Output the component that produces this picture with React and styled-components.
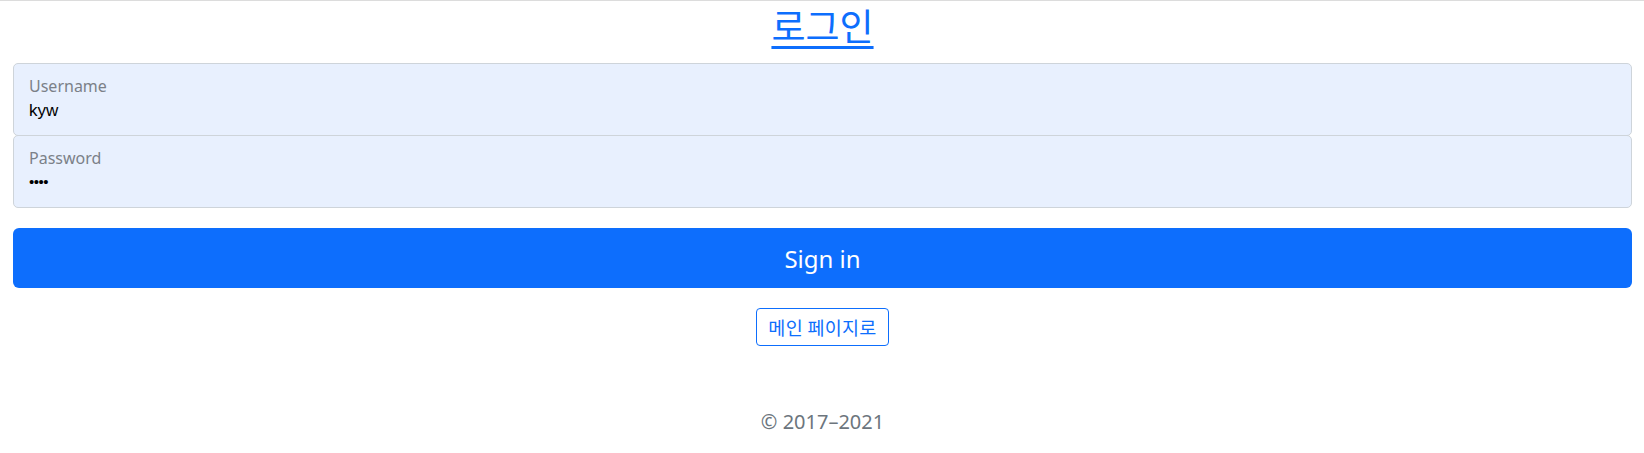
import React from "react";
import styled, { createGlobalStyle } from "styled-components";

const Global = createGlobalStyle`
  html, body { margin: 0; padding: 0; background: #fff; }
  body {
    font-family: "Noto Sans", "Noto Sans CJK KR", sans-serif;
    color: #212529;
    border-top: 1px solid #dcdcdc;
  }
  * { box-sizing: border-box; }
`;

const Main = styled.main`
  display: flex;
  flex-direction: column;
  align-items: stretch;
  padding: 0 12px 0 13px;
`;

const Title = styled.h1`
  margin: 0 0 14px;
  text-align: center;
  font-family: "Noto Sans CJK KR", sans-serif;
  font-weight: 400;
  font-size: 37px;
  line-height: 48px;
`;

const TitleLink = styled.a`
  color: #0d6efd;
  text-decoration: underline;
  text-underline-offset: 5px;
  text-decoration-thickness: 3px;
`;

const Field = styled.div`
  position: relative;
  height: 73px;
  margin-bottom: ${(p) => (p.$last ? "0" : "-1px")};
  background: #e8f0fe;
  border: 1px solid #ced4da;
  border-radius: 5px;
  padding: 12px 15px 0;
  display: flex;
  flex-direction: column;
`;

const Label = styled.label`
  font-size: 16px;
  line-height: 20px;
  color: #7b8088;
`;

const Value = styled.div`
  font-family: "Liberation Sans", Arial, sans-serif;
  font-size: 17px;
  line-height: 24px;
  color: #000;
  margin-top: 3px;
`;

const Dots = styled.div`
  font-family: "Liberation Sans", Arial, sans-serif;
  font-size: 15px;
  letter-spacing: -0.5px;
  line-height: 24px;
  margin-top: 2px;
  color: #000;
`;

const SignIn = styled.button`
  margin-top: 20px;
  height: 60px;
  border: none;
  border-radius: 6px;
  background: #0d6efd;
  color: #fff;
  font-family: "Noto Sans", sans-serif;
  font-size: 24px;
  cursor: pointer;
`;

const Center = styled.div`
  display: flex;
  justify-content: center;
  margin-top: 20px;
`;

const HomeBtn = styled.a`
  display: inline-flex;
  align-items: center;
  justify-content: center;
  height: 38px;
  padding: 0 11px;
  border: 1px solid #0d6efd;
  border-radius: 4px;
  color: #0d6efd;
  font-family: "Noto Sans CJK KR", sans-serif;
  font-size: 18.5px;
  letter-spacing: 0.3px;
  text-decoration: none;
`;

const Footer = styled.p`
  margin: 64px 0 0;
  text-align: center;
  color: #6c757d;
  font-size: 20px;
  line-height: 24px;
`;

export default function App() {
  return (
    <>
      <Global />
      <Main>
        <Title>
          <TitleLink href="#">로그인</TitleLink>
        </Title>
        <Field>
          <Label>Username</Label>
          <Value>kyw</Value>
        </Field>
        <Field $last>
          <Label>Password</Label>
          <Dots>••••</Dots>
        </Field>
        <SignIn>Sign in</SignIn>
        <Center>
          <HomeBtn href="#">메인 페이지로</HomeBtn>
        </Center>
        <Footer>© 2017–2021</Footer>
      </Main>
    </>
  );
}
